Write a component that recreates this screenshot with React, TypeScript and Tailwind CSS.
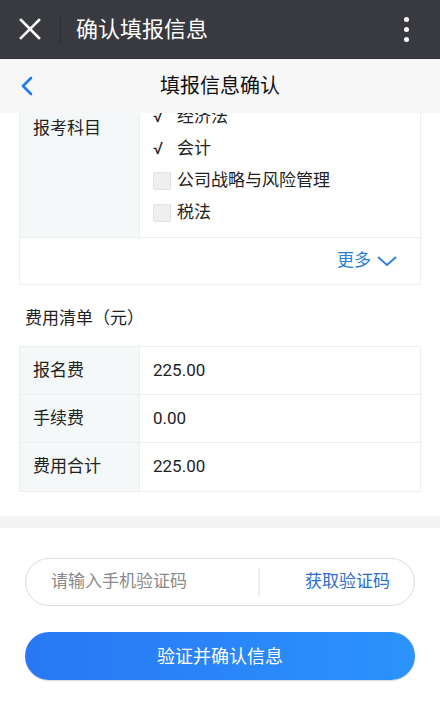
import React from "react"

const font = { fontFamily: "Roboto, 'Noto Sans CJK SC', sans-serif" }

function Check({ checked, label }: { checked: boolean; label: string }) {
  return (
    <div className="flex h-[32px] items-center">
      {checked ? (
        <span className="w-[24px] text-[17px] text-[#222]">√</span>
      ) : (
        <span className="mr-[6px] h-[18px] w-[18px] rounded-[2px] border border-[#e2e2e2] bg-[#efefef]" />
      )}
      <span className="text-[17px] text-[#222]">{label}</span>
    </div>
  )
}

function FeeRow({ label, value, last }: { label: string; value: string; last?: boolean }) {
  return (
    <div className={`flex h-[48px] ${last ? "" : "border-b border-[#eeeeee]"}`}>
      <div className="flex w-[120px] items-center border-r border-[#eeeeee] bg-[#f5f8f9] pl-[13px] text-[17px] text-[#222]">
        {label}
      </div>
      <div className="flex flex-1 items-center pl-[13px] text-[17px] text-[#222]">{value}</div>
    </div>
  )
}

export default function App() {
  return (
    <div className="flex h-[710px] w-[440px] flex-col overflow-hidden bg-white" style={font}>
      {/* top bar */}
      <div className="flex h-[59px] shrink-0 items-center border-b border-[#303135] bg-[#393a3f]">
        <svg width="60" height="58" viewBox="0 0 60 58" className="shrink-0">
          <path d="M21 20 L39 38 M39 20 L21 38" stroke="#fff" strokeWidth="2.6" strokeLinecap="square" />
        </svg>
        <div className="h-[29px] w-[1px] bg-[#2c2d31]" />
        <div className="ml-[15px] flex-1 text-[22px] text-white">确认填报信息</div>
        <div className="mr-[31px] flex flex-col gap-[5px]">
          <span className="h-[5px] w-[5px] rounded-full bg-white" />
          <span className="h-[5px] w-[5px] rounded-full bg-white" />
          <span className="h-[5px] w-[5px] rounded-full bg-white" />
        </div>
      </div>

      {/* page header */}
      <div className="relative flex h-[54px] shrink-0 items-center justify-center bg-[#f7f7f7]">
        <svg width="14" height="20" viewBox="0 0 14 20" className="absolute left-[20px] top-[17px]">
          <path d="M11 2 L3 10 L11 18" stroke="#1e7cf0" strokeWidth="2.6" fill="none" strokeLinecap="round" strokeLinejoin="round" />
        </svg>
        <span className="text-[20px] text-[#111]">填报信息确认</span>
      </div>

      {/* scrolling content */}
      <div className="flex-1 overflow-hidden">
        <div className="-mt-[17px]">
          <div className="mx-[19px] border border-[#eeeeee]">
            <div className="flex border-b border-[#eeeeee]">
              <div className="w-[120px] border-r border-[#eeeeee] bg-[#f5f8f9] pl-[13px] pt-[19px] text-[17px] leading-[24px] text-[#222]">
                报考科目
              </div>
              <div className="flex-1 pb-[8px] pl-[13px] pt-[4px]">
                <Check checked label="经济法" />
                <Check checked label="会计" />
                <Check checked={false} label="公司战略与风险管理" />
                <Check checked={false} label="税法" />
              </div>
            </div>
            <div className="flex h-[46px] items-center justify-end pr-[22px] text-[17px] text-[#2a7ed8]">
              <span>更多</span>
              <svg width="22" height="14" viewBox="0 0 22 14" className="ml-[5px]">
                <path d="M2 3 L11 11 L20 3" stroke="#2a7ed8" strokeWidth="1.8" fill="none" />
              </svg>
            </div>
          </div>

          <div className="mt-[21px] pl-[25px] text-[17px] leading-[24px] text-[#222]">费用清单（元）</div>

          <div className="mx-[19px] mt-[16px] border border-[#eeeeee]">
            <FeeRow label="报名费" value="225.00" />
            <FeeRow label="手续费" value="0.00" />
            <FeeRow label="费用合计" value="225.00" last />
          </div>

          <div className="mt-[24px] h-[12px] bg-[#f4f4f4]" />

          <div className="mx-[25px] mt-[30px] flex h-[48px] items-center rounded-full border border-[#dddddd]">
            <div className="flex-1 pl-[25px] text-[17px] text-[#8a8a8a]">请输入手机验证码</div>
            <div className="h-[28px] w-[2px] bg-[#eeeeee]" />
            <div className="w-[154px] pr-[24px] text-right text-[17px] text-[#2a6fce]">获取验证码</div>
          </div>

          <button className="mx-[25px] mt-[26px] flex h-[48px] w-[390px] items-center justify-center rounded-full bg-gradient-to-r from-[#2977f4] to-[#2c93fc] text-[18px] text-white shadow-[0_1px_1px_rgba(0,0,0,0.15)]">
            验证并确认信息
          </button>
        </div>
      </div>
    </div>
  )
}
